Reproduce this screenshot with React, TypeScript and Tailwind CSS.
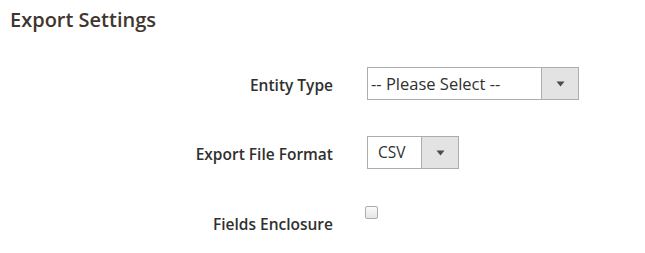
import type { ReactNode } from "react";

function Caret() {
  return (
    <svg width="9" height="6" viewBox="0 0 9 6">
      <path d="M0.5 0.5 L8.5 0.5 L4.5 5.5 Z" fill="#514943" />
    </svg>
  );
}

function Row({ label, top, children }: { label: string; top: string; children: ReactNode }) {
  return (
    <div className={`flex items-start h-[33px] ${top}`}>
      <div className="w-[333px] shrink-0 text-right pt-[2px] text-[15.5px] leading-[33px] font-semibold text-[#303030] whitespace-nowrap">
        {label}
      </div>
      <div className="pl-[34px]">{children}</div>
    </div>
  );
}

export default function App() {
  return (
    <div
      className="w-[645px] h-[253px] bg-white overflow-hidden"
      style={{ fontFamily: '"Open Sans", "Liberation Sans", sans-serif' }}
    >
      {/* Section title */}
      <div className="pl-[10px] pt-[8px] h-[32px] text-[20px] leading-[24px] font-semibold text-[#41362f]">
        Export Settings
      </div>

      <Row label="Entity Type" top="mt-[35px]">
        <div className="flex w-[212px] h-[33px] border border-[#adadad] bg-white">
          <div className="flex-1 pl-[3px] text-[16.5px] leading-[31px] text-[#303030] whitespace-nowrap">
            -- Please Select --
          </div>
          <div className="w-[37px] flex items-center justify-center bg-[#e3e3e3] border-l border-[#adadad]">
            <Caret />
          </div>
        </div>
      </Row>

      <Row label="Export File Format" top="mt-[36px]">
        <div className="flex w-[92px] h-[33px] border border-[#adadad] bg-white">
          <div className="flex-1 pl-[10px] text-[15.5px] leading-[31px] text-[#303030]">CSV</div>
          <div className="w-[37px] flex items-center justify-center bg-[#e3e3e3] border-l border-[#adadad]">
            <Caret />
          </div>
        </div>
      </Row>

      <Row label="Fields Enclosure" top="mt-[37px]">
        <div className="-ml-[2px] w-[13px] h-[13px] rounded-[2px] border border-[#adadad] bg-gradient-to-b from-[#fafafa] to-[#e6e6e6]" />
      </Row>
    </div>
  );
}
